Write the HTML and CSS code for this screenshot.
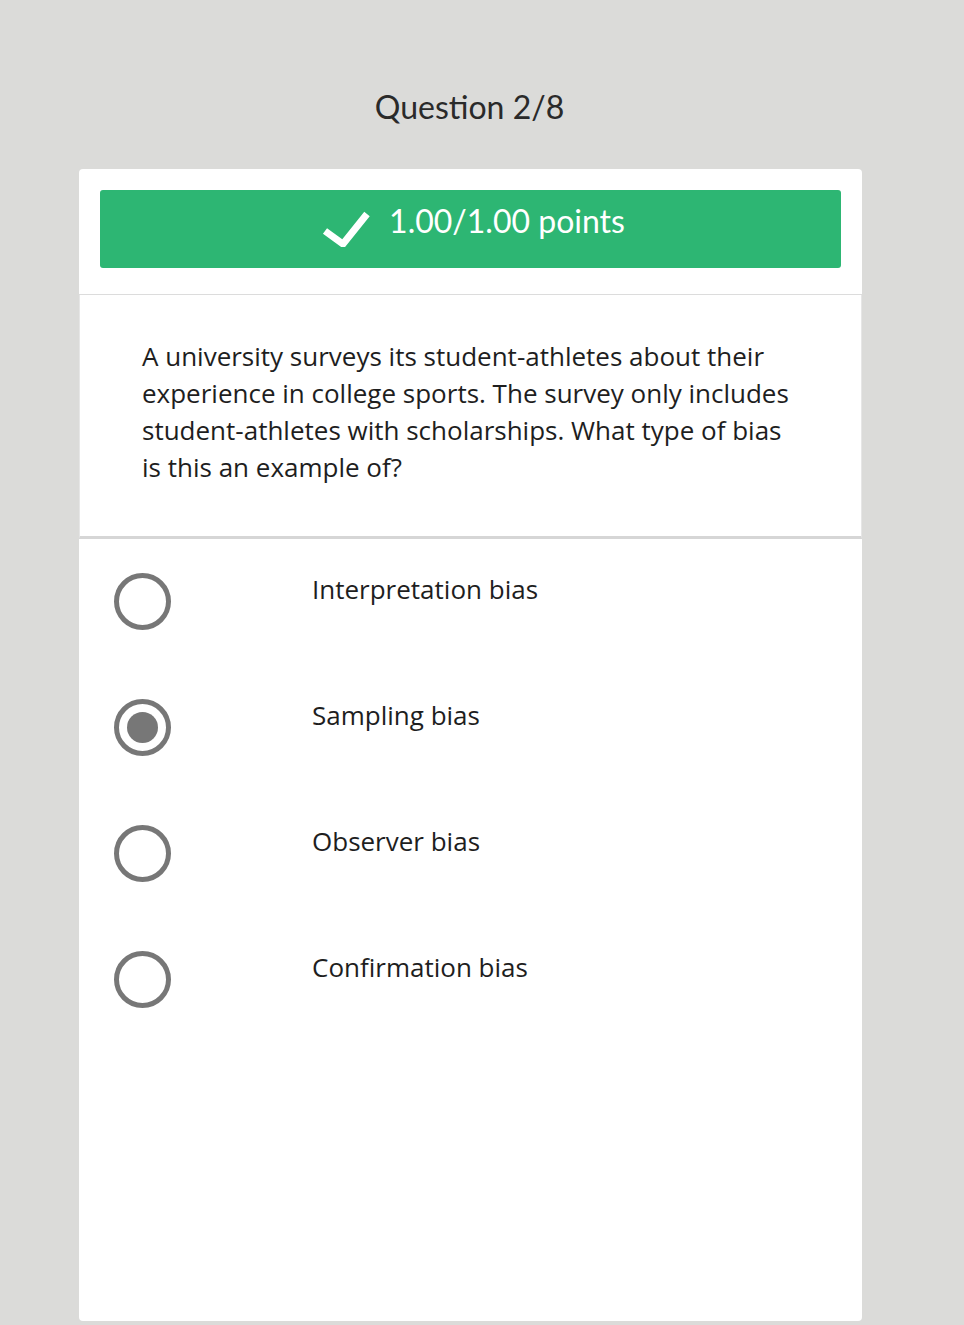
FILE: index.html
```html
<!DOCTYPE html>
<html>
<head>
<meta charset="utf-8">
<link rel="stylesheet" href="styles.css">
</head>
<body>
<div class="page">
  <h1 class="title">Question 2/8</h1>
  <div class="card">
    <div class="card-head">
      <div class="score">
        <svg class="check" width="48" height="36" viewBox="0 0 48 36"><path d="M3 20 L21 33 L45 3" fill="none" stroke="#fff" stroke-width="7"/></svg>
        <span class="score-text">1.00/1.00 points</span>
      </div>
    </div>
    <div class="question">
      <p>A university surveys its student-athletes about their experience in college sports. The survey only includes student-athletes with scholarships. What type of bias is this an example of?</p>
    </div>
    <ul class="options">
      <li class="option"><span class="radio"></span><span class="label">Interpretation bias</span></li>
      <li class="option"><span class="radio checked"></span><span class="label">Sampling bias</span></li>
      <li class="option"><span class="radio"></span><span class="label">Observer bias</span></li>
      <li class="option"><span class="radio"></span><span class="label">Confirmation bias</span></li>
    </ul>
  </div>
</div>
</body>
</html>
```
FILE: styles.css
```css
html, body {
  margin: 0;
  padding: 0;
  background: #dbdbd9;
}
body {
  font-family: "Open Sans", "Liberation Sans", sans-serif;
  color: #222;
}
.page {
  width: 783px;
  margin-left: 79px;
  padding-top: 87px;
}
.title {
  margin: 0 0 42px 0;
  font-family: Lato, "Open Sans", sans-serif;
  font-weight: 400;
  font-size: 32px;
  line-height: 40px;
  color: #2a2a2a;
  text-align: center;
  padding-right: 2px;
}
.card {
  background: #fff;
  border-radius: 4px;
  height: 1152px;
  overflow: hidden;
}
.card-head {
  padding: 21px 21px 26px 21px;
  border-bottom: 1px solid #dcdcdc;
}
.score {
  background: #2db673;
  border-radius: 3px;
  height: 78px;
  display: flex;
  align-items: center;
  justify-content: center;
  gap: 19px;
  padding-left: 6px;
}
.check {
  margin-top: 0;
  display: block;
}
.score-text {
  font-family: Lato, "Open Sans", sans-serif;
  font-size: 32px;
  color: #fff;
  margin-top: -18px;
}
.question {
  border-left: 1px solid #e6e6e6;
  border-right: 1px solid #e6e6e6;
  border-bottom: 3px solid #d6d6d6;
  padding: 43px 56px 50px 62px;
}
.question p {
  margin: 0;
  font-size: 26px;
  line-height: 37px;
  color: #1e1e1e;
}
.options {
  list-style: none;
  margin: 0;
  padding: 34px 0 0 35px;
}
.option {
  display: flex;
  align-items: flex-start;
  height: 126px;
}
.radio {
  box-sizing: border-box;
  width: 57px;
  height: 57px;
  border: 5px solid #777;
  border-radius: 50%;
  flex: none;
  display: flex;
  align-items: center;
  justify-content: center;
}
.radio.checked::after {
  content: "";
  width: 31px;
  height: 31px;
  border-radius: 50%;
  background: #777;
}
.label {
  margin-left: 141px;
  font-size: 26px;
  line-height: 32px;
  color: #1e1e1e;
  margin-top: 0;
}
```
